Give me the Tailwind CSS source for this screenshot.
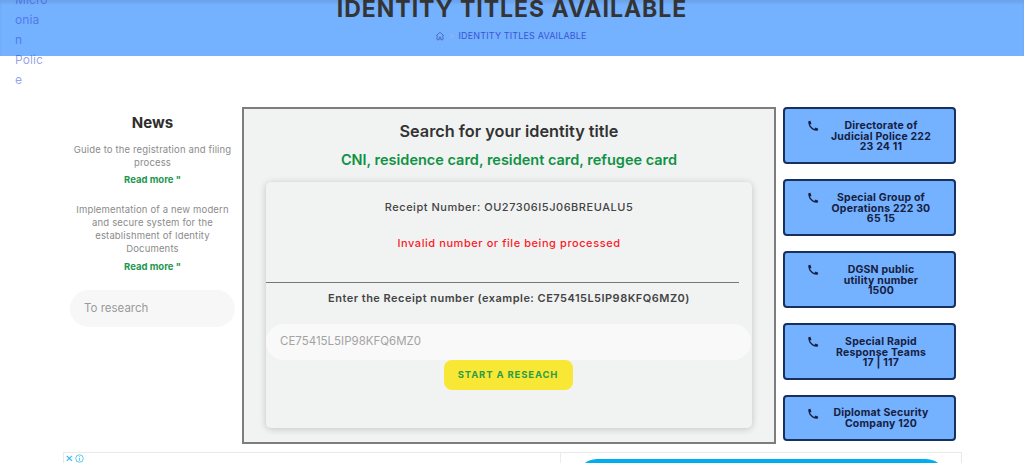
<!doctype html>
<html lang="en">
<head>
<meta charset="UTF-8" />
<title>Identity titles available</title>
<script src="https://cdn.jsdelivr.net/npm/@tailwindcss/browser@4"></script>
</head>
<body class="bg-white font-['Inter','Liberation_Sans',sans-serif] h-[463px] w-[1024px] overflow-hidden relative">
	<!-- nav word that overflows over the header -->
	<div class="absolute left-[15px] top-[-10px] w-[28px] z-10 text-[12px] leading-[20px] tracking-[0.1px] text-[#3040d0]/50">Micro onia n Polic e</div>

	<header class="h-[56px] bg-[#74b1ff] flex flex-col items-center shadow-[inset_0_3px_3px_rgba(0,0,0,0.08)]">
		<h1 class="text-[23px] leading-[18px] font-bold text-[#343434] tracking-[1px] whitespace-nowrap">IDENTITY TITLES AVAILABLE</h1>
		<nav class="flex items-center mt-[11px] text-[9px] tracking-[0.15px] text-[#3a55d6] -translate-x-[1px]">
			<svg class="w-[10px] h-[10px] mr-[3px]" viewBox="0 0 24 24" fill="none" stroke="#4a63b8" stroke-width="2"><path d="M3 11l9-8 9 8M5 10v11h5v-6h4v6h5V10"/></svg>
			<span class="text-[#9db4f5] mr-[4px]">&gt;</span>
			<span>IDENTITY TITLES AVAILABLE</span>
		</nav>
	</header>

	<main class="flex items-start pl-[70px] pt-[51px]">
		<!-- news column -->
		<aside class="w-[165px] text-center">
			<h2 class="mt-[7px] text-[15px] leading-[18px] font-bold text-[#2e2e2e]">News</h2>
			<p class="mt-[12px] px-[3px] text-[9.5px] leading-[12.700px] tracking-[0.15px] text-[#8b8b8b]">Guide to the registration and filing process</p>
			<a class="block mt-[4px] text-[9.5px] leading-[13px] font-bold text-[#1e9750]">Read more "</a>
			<p class="mt-[18px] px-[3px] text-[9.5px] leading-[12.700px] tracking-[0.15px] text-[#8b8b8b]">Implementation of a new modern and secure system for the establishment of Identity Documents</p>
			<a class="block mt-[5px] text-[9.5px] leading-[13px] font-bold text-[#1e9750]">Read more "</a>
			<div class="mt-[17px] h-[37px] rounded-full bg-[#f7f7f7] flex items-center pl-[14px] text-[11.5px] text-[#9a9a9a]">To research</div>
		</aside>

		<!-- search panel -->
		<section class="ml-[7px] w-[534px] h-[337px] border-2 border-[#7d7d7d] bg-[#f1f3f3] text-center pt-[13px]">
			<h2 class="text-[16.300px] leading-[18px] font-semibold text-[#333]">Search for your identity title</h2>
			<p class="mt-[11px] text-[14.500px] leading-[18px] font-semibold text-[#109245]">CNI, residence card, resident card, refugee card</p>
			<div class="mt-[13px] mx-[22px] h-[246px] rounded-[5px] bg-[#f1f3f3] shadow-[0_1px_7px_rgba(0,0,0,0.2)] pt-[17px]">
				<p class="text-[11px] leading-[16px] font-medium text-[#444] tracking-[0.53px]">Receipt Number: OU27306I5J06BREUALU5</p>
				<p class="mt-[20px] text-[11px] leading-[16px] font-medium text-[#fb1a28] tracking-[0.57px]">Invalid number or file being processed</p>
				<hr class="mt-[31px] mr-[13px] border-[#777]" />
				<p class="mt-[7px] text-[11px] leading-[16px] font-semibold text-[#444] tracking-[0.48px]">Enter the Receipt number (example: CE75415L5IP98KFQ6MZ0)</p>
				<div class="mt-[18px] mr-[1px] h-[36px] rounded-full bg-[#f9f9f9] flex items-center pl-[14px] text-[11.5px] text-[#a3a3a3]">CE75415L5IP98KFQ6MZ0</div>
				<button class="block mx-auto -translate-x-[1px] w-[129px] h-[30px] rounded-[8px] bg-[#f9e736] text-[9.5px] font-bold tracking-[0.85px] text-[#2e9d45]">START A RESEACH</button>
			</div>
		</section>

		<!-- emergency numbers -->
		<aside class="ml-[7px] w-[173px] flex flex-col gap-[15px]">
			<a class="h-[57px] bg-[#74b1ff] border-2 border-[#16315f] rounded-[4px] flex items-start pt-[10px] text-[#16203f]">
				<svg class="w-[12px] h-[12px] ml-[22px] mt-[1px] shrink-0" viewBox="0 0 24 24" fill="currentColor"><path d="M6.6 1.500 2.600 2.600C1.900 12.900 10 22.400 21.400 21.500l1.100-4.200-5.300-2.300-2.500 3C11.500 16.400 7.600 12.500 6 9.300l3-2.500z"/></svg>
				<span class="ml-[10px] mt-[2px] w-[104px] text-center text-[10.500px] leading-[10.500px] tracking-[0.2px] font-bold whitespace-nowrap">Directorate of<br />Judicial Police 222<br />23 24 11</span>
			</a>
			<a class="h-[57px] bg-[#74b1ff] border-2 border-[#16315f] rounded-[4px] flex items-start pt-[10px] text-[#16203f]">
				<svg class="w-[12px] h-[12px] ml-[22px] mt-[1px] shrink-0" viewBox="0 0 24 24" fill="currentColor"><path d="M6.6 1.500 2.600 2.600C1.900 12.900 10 22.400 21.400 21.500l1.100-4.200-5.300-2.300-2.500 3C11.500 16.400 7.600 12.500 6 9.300l3-2.500z"/></svg>
				<span class="ml-[10px] mt-[2px] w-[104px] text-center text-[10.500px] leading-[10.500px] tracking-[0.2px] font-bold whitespace-nowrap">Special Group of<br />Operations 222 30<br />65 15</span>
			</a>
			<a class="h-[57px] bg-[#74b1ff] border-2 border-[#16315f] rounded-[4px] flex items-start pt-[10px] text-[#16203f]">
				<svg class="w-[12px] h-[12px] ml-[22px] mt-[1px] shrink-0" viewBox="0 0 24 24" fill="currentColor"><path d="M6.6 1.500 2.600 2.600C1.900 12.900 10 22.400 21.400 21.500l1.100-4.200-5.300-2.300-2.500 3C11.500 16.400 7.600 12.500 6 9.300l3-2.500z"/></svg>
				<span class="ml-[10px] mt-[2px] w-[104px] text-center text-[10.500px] leading-[10.500px] tracking-[0.2px] font-bold whitespace-nowrap">DGSN public<br />utility number<br />1500</span>
			</a>
			<a class="h-[57px] bg-[#74b1ff] border-2 border-[#16315f] rounded-[4px] flex items-start pt-[10px] text-[#16203f]">
				<svg class="w-[12px] h-[12px] ml-[22px] mt-[1px] shrink-0" viewBox="0 0 24 24" fill="currentColor"><path d="M6.6 1.500 2.600 2.600C1.900 12.900 10 22.400 21.400 21.500l1.100-4.200-5.300-2.300-2.500 3C11.500 16.400 7.600 12.500 6 9.300l3-2.500z"/></svg>
				<span class="ml-[10px] mt-[2px] w-[104px] text-center text-[10.500px] leading-[10.500px] tracking-[0.2px] font-bold whitespace-nowrap">Special Rapid<br />Response Teams<br />17 | 117</span>
			</a>
			<a class="h-[46px] bg-[#74b1ff] border-2 border-[#16315f] rounded-[4px] flex items-start pt-[10px] text-[#16203f]">
				<svg class="w-[12px] h-[12px] ml-[22px] mt-[1px] shrink-0" viewBox="0 0 24 24" fill="currentColor"><path d="M6.6 1.500 2.600 2.600C1.900 12.900 10 22.400 21.400 21.500l1.100-4.200-5.300-2.300-2.500 3C11.500 16.400 7.600 12.500 6 9.300l3-2.500z"/></svg>
				<span class="ml-[10px] mt-[1px] w-[104px] text-center text-[10.500px] leading-[10.500px] tracking-[0.2px] font-bold whitespace-nowrap">Diplomat Security<br />Company 120</span>
			</a>
		</aside>
	</main>

	<!-- ad strip at the bottom of the fold -->
	<div class="absolute left-[63px] top-[452px] w-[899px] h-[11px] overflow-hidden border-t border-x border-[#e9e9e9] flex">
		<div class="w-[497px] border-r border-[#ececec] flex items-start pl-[1px] text-[#25b8e8] text-[10px] leading-[11px]">
			<span>✕</span>
			<svg class="w-[9px] h-[9px] ml-[2px] mt-[1px]" viewBox="0 0 12 12" fill="none" stroke="currentColor"><circle cx="6" cy="6" r="5"/><path d="M6 5v4M6 3v1"/></svg>
		</div>
		<div class="flex-1 pl-[16px] pr-[15px] pt-[6px]">
			<div class="h-[40px] rounded-[20px] bg-[#00aeef]"></div>
		</div>
	</div>
</body>
</html>
